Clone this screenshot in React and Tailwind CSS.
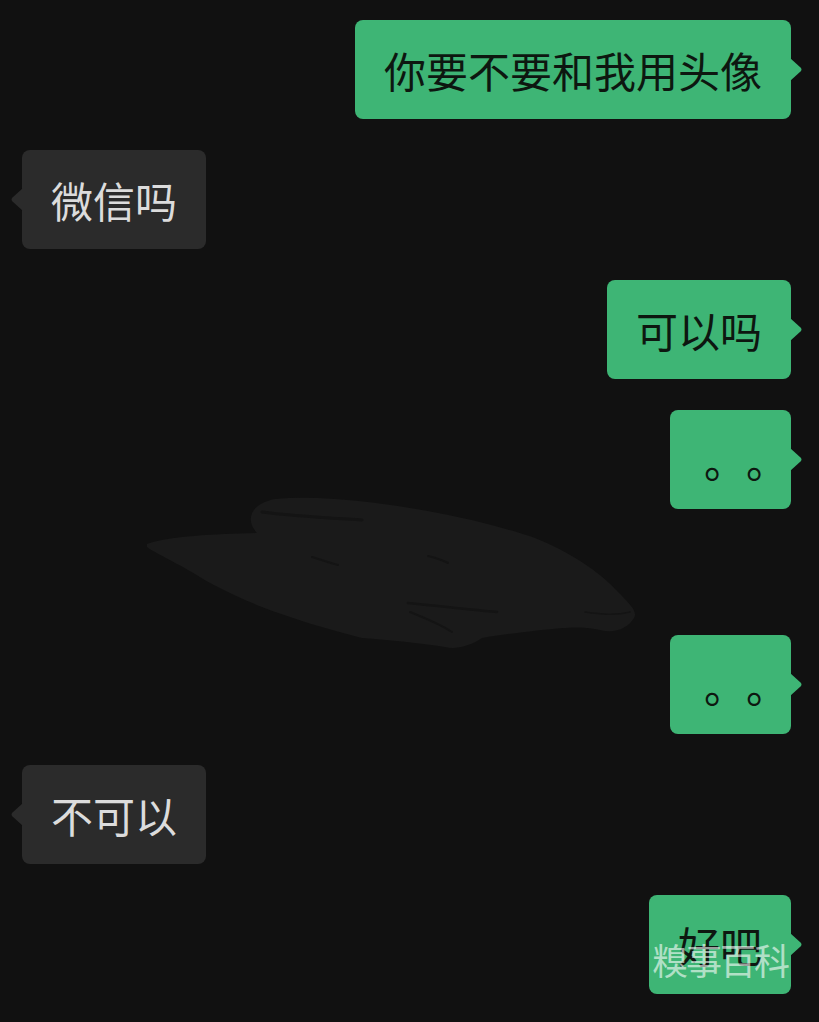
const MESSAGES = [
  { side: 'right', text: '你要不要和我用头像' },
  { side: 'left', text: '微信吗' },
  { side: 'right', text: '可以吗' },
  { side: 'right', text: '。。', dots: true },
  { spacer: true },
  { side: 'right', text: '。。', dots: true },
  { side: 'left', text: '不可以' },
  { side: 'right', text: '好吧', mark: true },
];

function Tail({ side, color }) {
  // little pointer on the side of the bubble
  if (side === 'right') {
    return (
      <svg className="absolute right-[-12px] top-[38px]" width="13" height="23" viewBox="0 0 13 23">
        <path d="M0 0 L10.5 9.5 Q12.5 11.5 10.5 13.5 L0 23 Z" fill={color} />
      </svg>
    );
  }
  return (
    <svg className="absolute left-[-12px] top-[38px]" width="13" height="23" viewBox="0 0 13 23">
      <path d="M13 0 L2.5 9.5 Q0.5 11.5 2.5 13.5 L13 23 Z" fill={color} />
    </svg>
  );
}

function Bubble({ msg }) {
  const mine = msg.side === 'right';
  return (
    <div className={mine ? 'flex justify-end pr-[28px]' : 'flex justify-start pl-[22px]'}>
      <div
        className={
          'relative h-[99px] rounded-[8px] flex items-center text-[42px] leading-none ' +
          (mine ? 'bg-[#3eb575] text-[#0d1710] ' : 'bg-[#2b2b2b] text-[#dcdcdc] ') +
          (msg.dots ? 'w-[121px] pl-[34px]' : 'px-[29px]')
        }
      >
        {msg.dots ? (
          <span className="flex">
            {msg.text.split('').map((c, i) => (
              <span key={i} className="inline-block w-[42px]">{c}</span>
            ))}
          </span>
        ) : (
          <span className="whitespace-nowrap">{msg.text}</span>
        )}
        <Tail side={msg.side} color={mine ? '#3eb575' : '#2b2b2b'} />
        {msg.mark && (
          <span className="absolute left-[3px] top-[46px] whitespace-nowrap text-[36px] leading-none tracking-[-2px] text-white/60">
            糗事百科
          </span>
        )}
      </div>
    </div>
  );
}

function Scribble() {
  return (
    <svg className="absolute left-0 top-0 pointer-events-none" width="819" height="1022" viewBox="0 0 819 1022">
      <path
        d="M147 544 C170 536 215 534 257 533 C245 520 250 504 275 499 C320 495 370 502 410 508 C450 514 500 526 535 538 C570 552 600 572 618 592 C630 604 638 612 634 618 C628 628 615 634 600 630 C580 626 570 628 563 628 C540 630 505 634 482 638 C470 646 455 650 445 647 C420 643 390 640 362 638 C330 630 290 618 262 607 C235 596 210 584 195 574 C175 562 155 553 147 547 Z"
        fill="#1a1a1a"
      />
      <g fill="none" stroke="#141414" strokeLinecap="round">
        <path d="M262 512 C290 516 330 518 362 520" strokeWidth="3" />
        <path d="M312 557 C322 560 330 563 338 565" strokeWidth="2" />
        <path d="M428 556 C436 558 442 560 448 563" strokeWidth="2" />
        <path d="M408 603 C440 606 470 610 497 612" strokeWidth="2.5" />
        <path d="M410 612 C425 618 440 624 452 632" strokeWidth="2" />
        <path d="M585 612 C600 614 615 616 630 612" strokeWidth="1.5" />
      </g>
    </svg>
  );
}

export default function App() {
  return (
    <div className="relative min-h-[1022px] w-full overflow-hidden bg-[#111111] font-['Noto_Sans_CJK_SC',sans-serif]">
      <Scribble />
      <div className="relative flex flex-col gap-[31px] pt-[20px]">
        {MESSAGES.map((m, i) =>
          m.spacer ? <div key={i} className="h-[64px]" /> : <Bubble key={i} msg={m} />
        )}
      </div>
    </div>
  );
}
